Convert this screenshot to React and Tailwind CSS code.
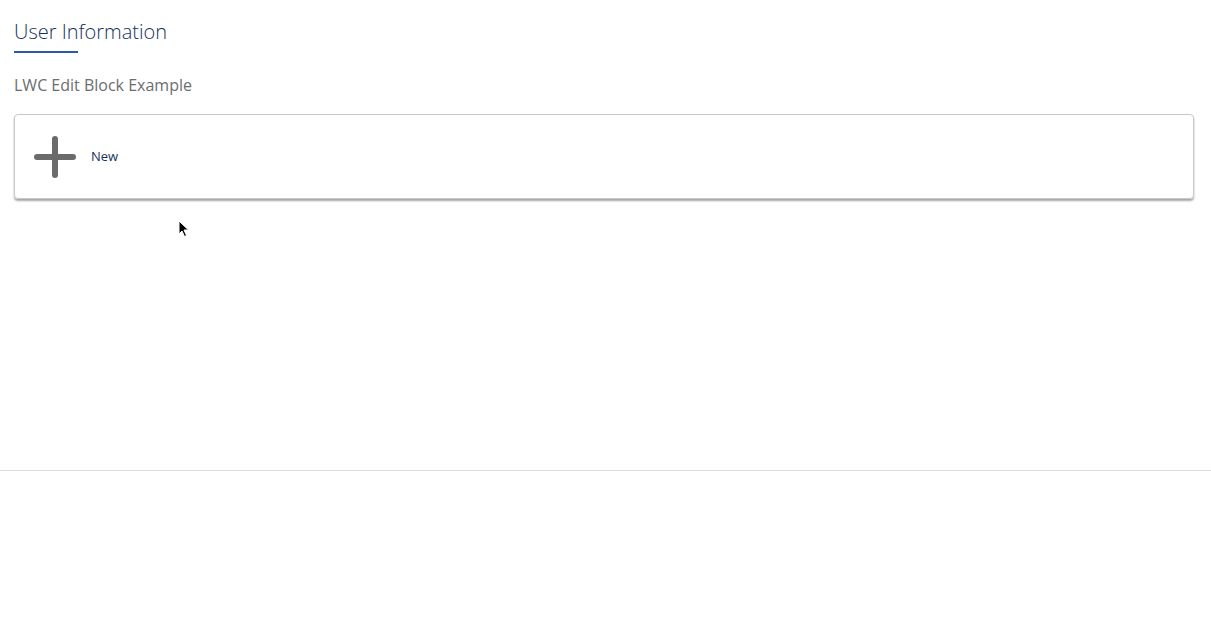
const PlusIcon = () => (
  <svg width="42" height="42" viewBox="0 0 42 42">
    <path d="M21 3v36M3 21h36" stroke="#6b6b6b" strokeWidth="6" strokeLinecap="round" />
  </svg>
);

const Cursor = () => (
  <svg width="12" height="18" viewBox="0 0 12 18" className="absolute left-[178px] top-[220px]">
    <path d="M1 1v13l3-3 2.5 5.5 2-1L6 10h4.5z" fill="#000" stroke="#fff" strokeWidth="1" />
  </svg>
);

export default function App() {
  return (
    <div className="relative w-[1211px] h-[641px] bg-white" style={{ fontFamily: '"Open Sans", "Liberation Sans", sans-serif' }}>
      <div className="h-[471px] border-b border-[#dddbda] px-[14px] pt-[19px]">
        <div className="inline-block">
          <h1 className="text-[20px] leading-[26px] font-light text-[#16325c]">User Information</h1>
          <div className="mt-[6px] w-[64px] h-[2px] bg-[#2a5ba8]" />
        </div>
        <p className="mt-[22px] text-[16px] leading-[20px] text-[#6b6d70]">LWC Edit Block Example</p>
        <div className="mt-[19px] w-[1180px] h-[85px] rounded-[4px] border border-[#c9c7c5] shadow-[0_2px_2px_rgba(0,0,0,0.35)] flex items-center pl-[19px]">
          <PlusIcon />
          <span className="ml-[15px] text-[13px] text-[#16325c]">New</span>
        </div>
      </div>
      <Cursor />
    </div>
  );
}
